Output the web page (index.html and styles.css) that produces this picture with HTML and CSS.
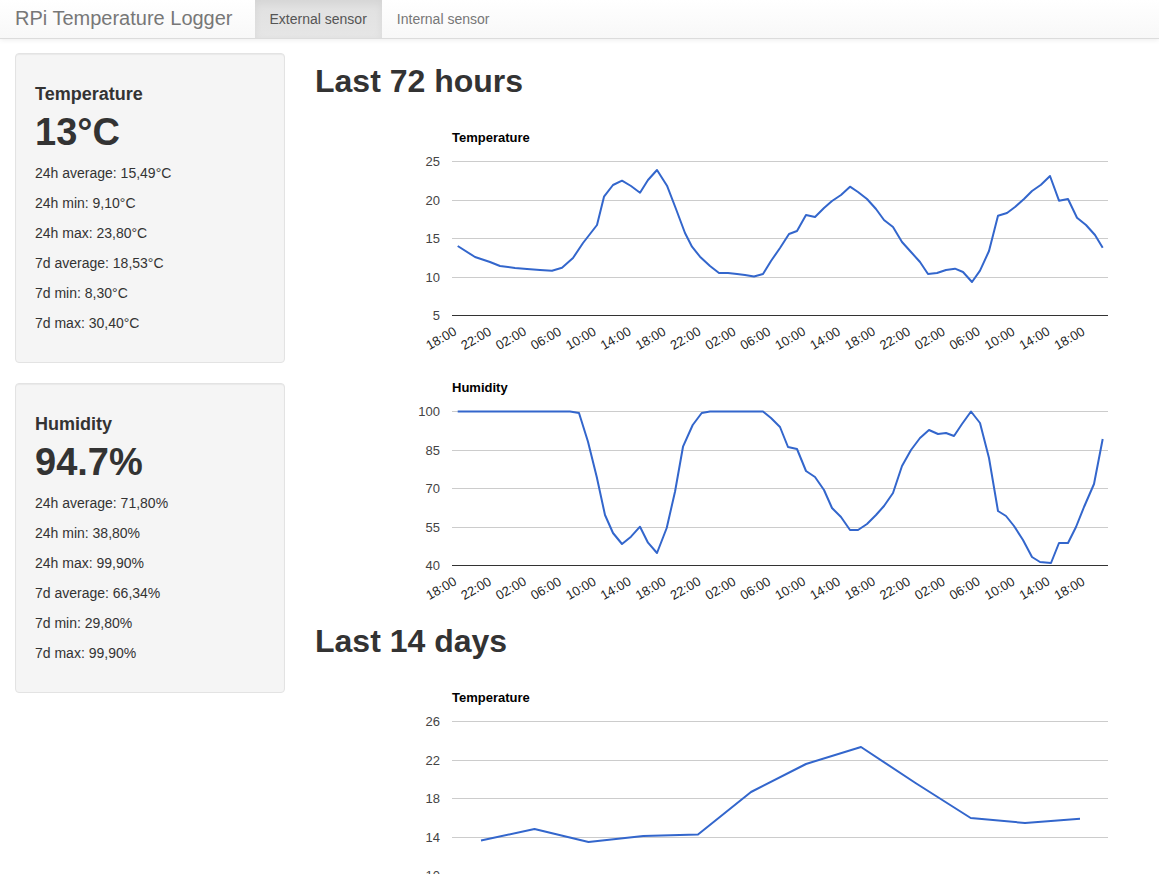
FILE: index.html
```html
<!DOCTYPE html>
<html lang="en">
<head>
<meta charset="utf-8">
<title>RPi Temperature Logger</title>
<link rel="stylesheet" href="styles.css">
</head>
<body>
<nav class="navbar">
  <a class="brand" href="#">RPi Temperature Logger</a>
  <ul class="nav">
    <li class="nav-item active"><a href="#">External sensor</a></li>
    <li class="nav-item"><a href="#">Internal sensor</a></li>
  </ul>
</nav>
<div class="layout">
  <aside class="sidebar">
    <div class="well">
      <h4 class="well-title">Temperature</h4>
      <div class="well-value">13°C</div>
      <p class="stat">24h average: 15,49°C</p>
      <p class="stat">24h min: 9,10°C</p>
      <p class="stat">24h max: 23,80°C</p>
      <p class="stat">7d average: 18,53°C</p>
      <p class="stat">7d min: 8,30°C</p>
      <p class="stat">7d max: 30,40°C</p>
    </div>
    <div class="well">
      <h4 class="well-title">Humidity</h4>
      <div class="well-value">94.7%</div>
      <p class="stat">24h average: 71,80%</p>
      <p class="stat">24h min: 38,80%</p>
      <p class="stat">24h max: 99,90%</p>
      <p class="stat">7d average: 66,34%</p>
      <p class="stat">7d min: 29,80%</p>
      <p class="stat">7d max: 99,90%</p>
    </div>
  </aside>
  <main class="main">
    <h1 class="section-title">Last 72 hours</h1>
    <svg class="chart" viewBox="315 113 829 250" width="829" height="250">
      <text class="chart-title" x="452" y="141.5">Temperature</text>
      <g class="grid">
        <line x1="452" x2="1108" y1="161.5" y2="161.5"/>
        <line x1="452" x2="1108" y1="200.5" y2="200.5"/>
        <line x1="452" x2="1108" y1="238.5" y2="238.5"/>
        <line x1="452" x2="1108" y1="277.5" y2="277.5"/>
      </g>
      <line class="baseline" x1="452" x2="1108" y1="315.5" y2="315.5"/>
      <g class="ylabels">
        <text x="440" y="166">25</text>
        <text x="440" y="205">20</text>
        <text x="440" y="243">15</text>
        <text x="440" y="282">10</text>
        <text x="440" y="320">5</text>
      </g>
      <g class="xlabels">
        <text x="457.5" y="334" transform="rotate(-30 457.5 334)">18:00</text>
        <text x="492.4" y="334" transform="rotate(-30 492.4 334)">22:00</text>
        <text x="527.3" y="334" transform="rotate(-30 527.3 334)">02:00</text>
        <text x="562.2" y="334" transform="rotate(-30 562.2 334)">06:00</text>
        <text x="597.1" y="334" transform="rotate(-30 597.1 334)">10:00</text>
        <text x="632" y="334" transform="rotate(-30 632 334)">14:00</text>
        <text x="666.9" y="334" transform="rotate(-30 666.9 334)">18:00</text>
        <text x="701.8" y="334" transform="rotate(-30 701.8 334)">22:00</text>
        <text x="736.7" y="334" transform="rotate(-30 736.7 334)">02:00</text>
        <text x="771.6" y="334" transform="rotate(-30 771.6 334)">06:00</text>
        <text x="806.5" y="334" transform="rotate(-30 806.5 334)">10:00</text>
        <text x="841.4" y="334" transform="rotate(-30 841.4 334)">14:00</text>
        <text x="876.3" y="334" transform="rotate(-30 876.3 334)">18:00</text>
        <text x="911.2" y="334" transform="rotate(-30 911.2 334)">22:00</text>
        <text x="946.1" y="334" transform="rotate(-30 946.1 334)">02:00</text>
        <text x="981" y="334" transform="rotate(-30 981 334)">06:00</text>
        <text x="1015.9" y="334" transform="rotate(-30 1015.9 334)">10:00</text>
        <text x="1050.8" y="334" transform="rotate(-30 1050.8 334)">14:00</text>
        <text x="1085.7" y="334" transform="rotate(-30 1085.7 334)">18:00</text>
      </g>
      <polyline class="series" points="457.7,246 475,257 490,262 500,266 515,268 527,269 540,270 552,270.7 562,267.7 573,258 583,243 597,225 604,196.7 613,185 622,180.7 631,186 640,192.7 648,180 657,170 667,185.7 676,209 685,233 692,246.7 700,256.7 710,266 719,273 728,273 737,274 745,275 754,276.5 763,274 771,261 780,248 789,234 797,231 806,215 815,217 824,208 832,201 841,195 850,186.7 858,192 867,199 876,209 884,220 893,227 902,242 911,252 920,262 928,274 937,273 946,270 955,268.7 963,272 972,282 980,270.7 989,251 998,215.7 1007,213 1015,207 1024,199 1032,191 1041,184.7 1050,176 1059,200.7 1068,199 1077,217.7 1086,225 1095,235 1102.7,247.7"/>
    </svg>
    <svg class="chart" viewBox="315 363 829 250" width="829" height="250">
      <text class="chart-title" x="452" y="391.5">Humidity</text>
      <g class="grid">
        <line x1="452" x2="1108" y1="411.5" y2="411.5"/>
        <line x1="452" x2="1108" y1="450.5" y2="450.5"/>
        <line x1="452" x2="1108" y1="488.5" y2="488.5"/>
        <line x1="452" x2="1108" y1="527.5" y2="527.5"/>
      </g>
      <line class="baseline" x1="452" x2="1108" y1="565.5" y2="565.5"/>
      <g class="ylabels">
        <text x="440" y="416">100</text>
        <text x="440" y="455">85</text>
        <text x="440" y="493">70</text>
        <text x="440" y="532">55</text>
        <text x="440" y="570">40</text>
      </g>
      <g class="xlabels">
        <text x="457.5" y="584" transform="rotate(-30 457.5 584)">18:00</text>
        <text x="492.4" y="584" transform="rotate(-30 492.4 584)">22:00</text>
        <text x="527.3" y="584" transform="rotate(-30 527.3 584)">02:00</text>
        <text x="562.2" y="584" transform="rotate(-30 562.2 584)">06:00</text>
        <text x="597.1" y="584" transform="rotate(-30 597.1 584)">10:00</text>
        <text x="632" y="584" transform="rotate(-30 632 584)">14:00</text>
        <text x="666.9" y="584" transform="rotate(-30 666.9 584)">18:00</text>
        <text x="701.8" y="584" transform="rotate(-30 701.8 584)">22:00</text>
        <text x="736.7" y="584" transform="rotate(-30 736.7 584)">02:00</text>
        <text x="771.6" y="584" transform="rotate(-30 771.6 584)">06:00</text>
        <text x="806.5" y="584" transform="rotate(-30 806.5 584)">10:00</text>
        <text x="841.4" y="584" transform="rotate(-30 841.4 584)">14:00</text>
        <text x="876.3" y="584" transform="rotate(-30 876.3 584)">18:00</text>
        <text x="911.2" y="584" transform="rotate(-30 911.2 584)">22:00</text>
        <text x="946.1" y="584" transform="rotate(-30 946.1 584)">02:00</text>
        <text x="981" y="584" transform="rotate(-30 981 584)">06:00</text>
        <text x="1015.9" y="584" transform="rotate(-30 1015.9 584)">10:00</text>
        <text x="1050.8" y="584" transform="rotate(-30 1050.8 584)">14:00</text>
        <text x="1085.7" y="584" transform="rotate(-30 1085.7 584)">18:00</text>
      </g>
      <polyline class="series" points="457.7,411.5 570,411.5 579,413 588,441.7 596.7,476.7 605,515 613,533 622,544 631,536.7 640,526.7 648,542.7 657,553 666.7,528 675,491.7 683,446.7 692.7,425 701.7,413 710,411.5 763,411.5 771,418 780,427 788,447 797,449 806,471 815,477 824,490 832,508 841,517 850,530 858,530 867,524 876,515 884,506 893,493 902,466 911,450 920,438 929,430 938,434 946,433 954,436 962,424 971,411.5 980,423 989,458 998,511 1006,516 1014,526 1023,540 1032,557 1040,562 1051,563 1059,543 1068,543 1076,527 1084,507 1094,484 1102.7,439"/>
    </svg>
    <h1 class="section-title">Last 14 days</h1>
    <svg class="chart" viewBox="315 673 829 250" width="829" height="250">
      <text class="chart-title" x="452" y="701.5">Temperature</text>
      <g class="grid">
        <line x1="452" x2="1108" y1="721.5" y2="721.5"/>
        <line x1="452" x2="1108" y1="760.5" y2="760.5"/>
        <line x1="452" x2="1108" y1="798.5" y2="798.5"/>
        <line x1="452" x2="1108" y1="837.5" y2="837.5"/>
      </g>
      <line class="baseline" x1="452" x2="1108" y1="875.5" y2="875.5"/>
      <g class="ylabels">
        <text x="440" y="726">26</text>
        <text x="440" y="765">22</text>
        <text x="440" y="803">18</text>
        <text x="440" y="842">14</text>
        <text x="440" y="880">10</text>
      </g>
      <polyline class="series" points="481,840.5 534.5,829 588.5,842 643.3,836 698,834.5 751,792 806,764 861,747 915.5,783 970.7,818 1025,823 1080,818.7"/>
    </svg>
  </main>
</div>
</body>
</html>
```

FILE: styles.css
```css
html {
  scrollbar-width: none;
}
html::-webkit-scrollbar {
  display: none;
}
body {
  margin: 0;
  font-family: "Liberation Sans", Arial, sans-serif;
  font-size: 14px;
  line-height: 20px;
  color: #333;
  background: #fff;
}
.navbar {
  display: flex;
  align-items: stretch;
  height: 38px;
  background: linear-gradient(to bottom, #ffffff 0%, #f8f8f8 100%);
  border-bottom: 1px solid #dcdcdc;
  box-shadow: 0 1px 5px rgba(0, 0, 0, 0.075);
}
.brand {
  display: block;
  padding: 8px 22px 10px 15px;
  font-size: 20px;
  line-height: 20px;
  color: #777;
  text-decoration: none;
}
.nav {
  display: flex;
  list-style: none;
  margin: 0;
  padding: 0;
}
.nav-item a {
  display: block;
  padding: 9px 15px;
  line-height: 20px;
  color: #777;
  text-decoration: none;
}
.nav-item.active a {
  color: #555;
  background: linear-gradient(to bottom, #e0e0e0 0%, #e6e6e6 100%);
  box-shadow: inset 0 3px 9px rgba(0, 0, 0, 0.06);
}
.layout {
  display: grid;
  grid-template-columns: 300px 1fr;
  padding-top: 14px;
}
.sidebar {
  padding: 0 15px;
}
.main {
  padding: 0 15px;
}
.well {
  background: #f5f5f5;
  border: 1px solid #e3e3e3;
  border-radius: 4px;
  box-shadow: inset 0 1px 1px rgba(0, 0, 0, 0.05);
  padding: 19px;
  margin-bottom: 20px;
}
.well-title {
  margin: 12px 0 6px;
  font-size: 18px;
  line-height: 19.8px;
  font-weight: bold;
}
.well-value {
  margin: 0 0 10px;
  font-size: 38px;
  line-height: 42px;
  font-weight: bold;
}
.stat {
  margin: 0 0 10px;
}
.section-title {
  margin: 11px 0 14px;
  font-size: 32px;
  line-height: 35px;
  font-weight: bold;
  color: #333;
}
.chart {
  display: block;
  width: 829px;
  height: 250px;
  font-family: "Liberation Sans", Arial, sans-serif;
}
.chart-title {
  font-size: 13px;
  font-weight: bold;
  fill: #000;
}
.grid line {
  stroke: #cccccc;
  stroke-width: 1;
}
.baseline {
  stroke: #333;
  stroke-width: 1;
}
.ylabels text {
  font-size: 13px;
  fill: #444;
  text-anchor: end;
}
.xlabels text {
  font-size: 13px;
  fill: #222;
  text-anchor: end;
}
.series {
  fill: none;
  stroke: #3366cc;
  stroke-width: 2;
  stroke-linejoin: round;
}
```
